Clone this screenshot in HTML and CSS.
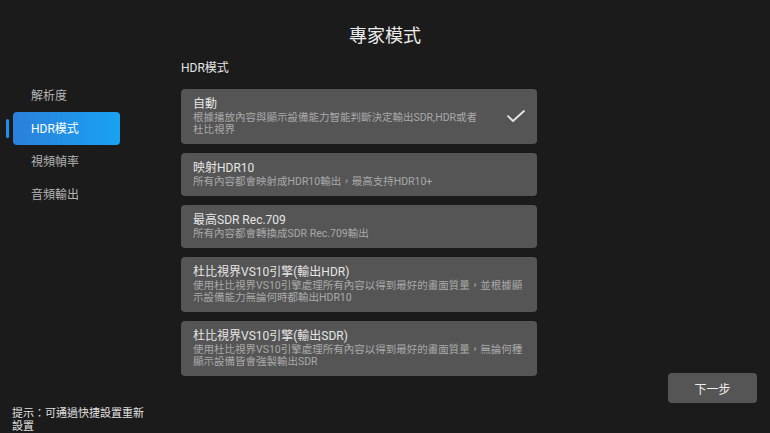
FILE: index.html
```html
<!DOCTYPE html>
<html lang="zh-Hant">
<head>
<meta charset="utf-8">
<title>專家模式</title>
<link rel="stylesheet" href="styles.css">
</head>
<body>
<div class="page">
  <header class="header"><h1 class="title">專家模式</h1></header>
  <aside class="sidebar">
    <nav class="menu">
      <div class="menu-item">解析度</div>
      <div class="menu-item active"><span class="indicator"></span>HDR模式</div>
      <div class="menu-item">視頻幀率</div>
      <div class="menu-item">音頻輸出</div>
    </nav>
    <p class="hint">提示：可通過快捷設置重新設置</p>
  </aside>
  <main class="main">
    <div class="section-label">HDR模式</div>
    <div class="cards">
      <div class="card selected">
        <div class="card-text">
          <div class="card-title">自動</div>
          <div class="card-desc">根據播放內容與顯示設備能力智能判斷決定輸出SDR,HDR或者杜比視界</div>
        </div>
        <svg class="check" width="18" height="13" viewBox="0 0 18 13"><path d="M1 6.2 L6 11 L17 1" fill="none" stroke="#e6e6e6" stroke-width="1.8" stroke-linecap="round" stroke-linejoin="round"/></svg>
      </div>
      <div class="card">
        <div class="card-text">
          <div class="card-title">映射HDR10</div>
          <div class="card-desc">所有內容都會映射成HDR10輸出，最高支持HDR10+</div>
        </div>
      </div>
      <div class="card">
        <div class="card-text">
          <div class="card-title">最高SDR Rec.709</div>
          <div class="card-desc">所有內容都會轉換成SDR Rec.709輸出</div>
        </div>
      </div>
      <div class="card">
        <div class="card-text">
          <div class="card-title">杜比視界VS10引擎(輸出HDR)</div>
          <div class="card-desc">使用杜比視界VS10引擎處理所有內容以得到最好的畫面質量，並根據顯示設備能力無論何時都輸出HDR10</div>
        </div>
      </div>
      <div class="card">
        <div class="card-text">
          <div class="card-title">杜比視界VS10引擎(輸出SDR)</div>
          <div class="card-desc">使用杜比視界VS10引擎處理所有內容以得到最好的畫面質量，無論何種顯示設備皆會強製輸出SDR</div>
        </div>
      </div>
    </div>
  </main>
  <div class="actions">
    <button class="next-btn">下一步</button>
  </div>
</div>
</body>
</html>
```
FILE: styles.css
```css
* { box-sizing: border-box; }
html, body {
  margin: 0;
  padding: 0;
  background: #1b1b1b;
}
body {
  width: 770px;
  height: 433px;
  overflow: hidden;
  font-family: Roboto, "Noto Sans CJK TC", sans-serif;
  color: #e8e8e8;
}
.page {
  display: grid;
  grid-template-columns: 181px 356px 1fr;
  grid-template-rows: 56px 1fr;
  height: 433px;
}
.header {
  grid-column: 1 / -1;
  padding-top: 23px;
  text-align: center;
}
.title {
  margin: 0;
  font-size: 18px;
  line-height: 26px;
  font-weight: 400;
  color: #ececec;
}
.sidebar {
  display: flex;
  flex-direction: column;
  justify-content: space-between;
  padding-top: 23px;
}
.menu {
  display: flex;
  flex-direction: column;
}
.menu-item {
  position: relative;
  margin-left: 13px;
  width: 107px;
  height: 33px;
  padding-left: 18px;
  padding-top: 2px;
  font-size: 12px;
  line-height: 31px;
  color: #b4b4b4;
  border-radius: 4px;
}
.menu-item.active {
  background: linear-gradient(90deg, #2b80da 0%, #1aa2f1 100%);
  color: #ffffff;
}
.indicator {
  position: absolute;
  left: -7px;
  top: 7px;
  width: 3px;
  height: 19px;
  border-radius: 2px;
  background: #1f8ff0;
}
.hint {
  margin: 0 0 0 12px;
  width: 140px;
  font-size: 11px;
  line-height: 13px;
  color: #e0e0e0;
}
.main {
  display: flex;
  flex-direction: column;
}
.section-label {
  margin-top: 3px;
  font-size: 12px;
  line-height: 18px;
  color: #e4e4e4;
  margin-bottom: 12px;
}
.cards {
  display: flex;
  flex-direction: column;
  gap: 9px;
}
.card {
  display: flex;
  align-items: center;
  background: #555555;
  border-radius: 4px;
  padding: 7px 12px 8px 12px;
}
.card-text {
  flex: 1;
  min-width: 0;
}
.card-title {
  font-size: 12px;
  line-height: 16px;
  color: #e6e6e6;
}
.card-desc {
  font-size: 10.5px;
  line-height: 12px;
  color: #a9a9a9;
}
.check {
  flex: none;
  margin-left: 28px;
}
.actions {
  display: flex;
  flex-direction: column;
  justify-content: flex-end;
  align-items: flex-end;
  padding: 0 13px 30px 0;
}
.next-btn {
  width: 89px;
  height: 30px;
  border: none;
  border-radius: 4px;
  background: #555555;
  color: #eeeeee;
  font-family: Roboto, "Noto Sans CJK TC", sans-serif;
  font-size: 12px;
  padding: 0;
}
```
